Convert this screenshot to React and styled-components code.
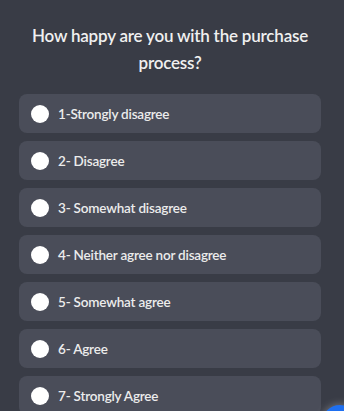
import React, { useState } from "react";
import styled, { createGlobalStyle } from "styled-components";

const GlobalStyle = createGlobalStyle`
  html, body {
    margin: 0;
    padding: 0;
    background: #393c46;
    overflow: hidden;
  }
  body {
    font-family: Lato, "Noto Sans", sans-serif;
  }
`;

const options = [
  "1-Strongly disagree",
  "2- Disagree",
  "3- Somewhat disagree",
  "4- Neither agree nor disagree",
  "5- Somewhat agree",
  "6- Agree",
  "7- Strongly Agree",
];

function App() {
  const [selected, setSelected] = useState(null);

  return (
    <Page>
      <GlobalStyle />
      <Question>How happy are you with the purchase process?</Question>
      <List>
        {options.map((opt, i) => (
          <Option key={opt} onClick={() => setSelected(i)}>
            <Radio checked={selected === i} />
            <Label>{opt}</Label>
          </Option>
        ))}
      </List>
      <Fab />
    </Page>
  );
}

const Page = styled.div`
  position: relative;
  width: 344px;
  height: 411px;
  overflow: hidden;
  box-sizing: border-box;
  padding: 22px 23px 0 19px;
  background: #393c46;
`;

const Question = styled.h2`
  margin: 0 0 18px 0;
  text-align: center;
  color: #f0f0f0;
  font-size: 17px;
  font-weight: 600;
  line-height: 27px;
  letter-spacing: -0.2px;
`;

const List = styled.div`
  display: flex;
  flex-direction: column;
  gap: 8px;
`;

const Option = styled.div`
  display: flex;
  align-items: center;
  gap: 9px;
  height: 39px;
  padding: 0 12px;
  border-radius: 8px;
  background: #4a4d59;
  cursor: pointer;
`;

const Radio = styled.span`
  width: 18px;
  height: 18px;
  border-radius: 50%;
  background: ${(p) => (p.checked ? "#2f7cf6" : "#ffffff")};
  flex-shrink: 0;
`;

const Label = styled.span`
  color: #ececec;
  font-size: 13.5px;
  font-weight: 600;
  letter-spacing: -0.2px;
`;

const Fab = styled.div`
  position: absolute;
  right: -14px;
  bottom: -30px;
  width: 36px;
  height: 36px;
  border-radius: 50%;
  background: #1e6ff0;
  box-shadow: 0 0 8px rgba(255, 255, 255, 0.35);
`;

export default App;
